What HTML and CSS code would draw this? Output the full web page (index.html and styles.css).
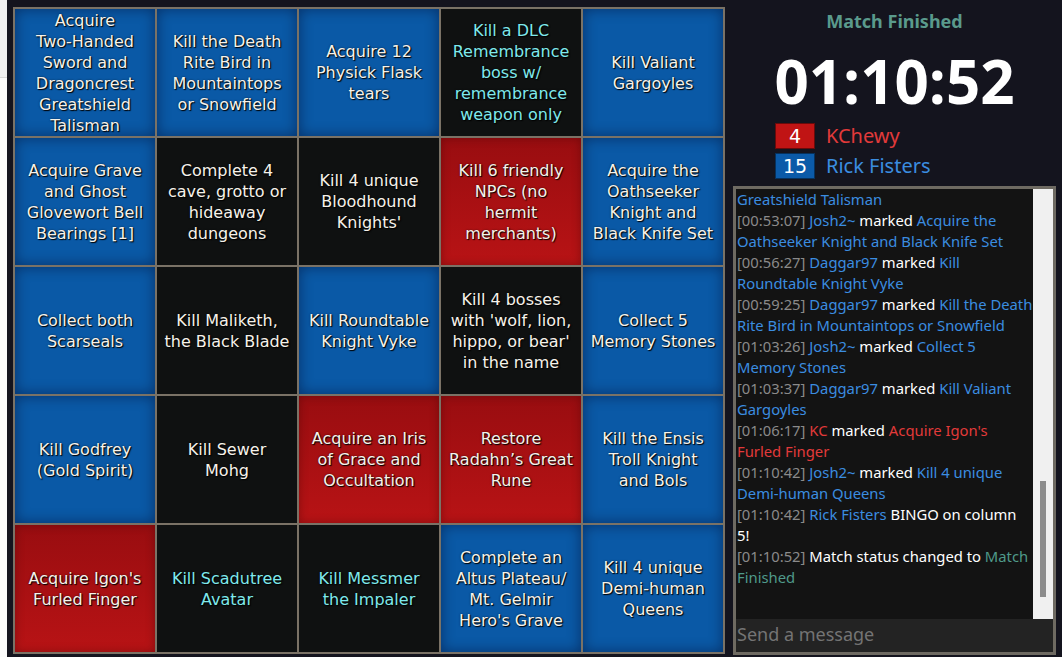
FILE: index.html
```html
<!DOCTYPE html>
<html>
<head>
<meta charset="utf-8">
<link rel="stylesheet" href="styles.css">
</head>
<body>
<div class="page">
  <div class="side-strip"><div class="strip-top"></div></div>
  <div class="board-wrap">
    <div class="board">
      <div class="cell blue">Acquire Two‑Handed Sword and Dragoncrest Greatshield Talisman</div>
      <div class="cell blue">Kill the Death Rite Bird in Mountaintops or Snowfield</div>
      <div class="cell blue">Acquire 12 Physick Flask tears</div>
      <div class="cell dark dlc">Kill a DLC Remembrance boss w/ remembrance weapon only</div>
      <div class="cell blue">Kill Valiant Gargoyles</div>

      <div class="cell blue">Acquire Grave and Ghost Glovewort Bell Bearings [1]</div>
      <div class="cell dark">Complete 4 cave, grotto or hideaway dungeons</div>
      <div class="cell dark">Kill 4 unique Bloodhound Knights'</div>
      <div class="cell red">Kill 6 friendly NPCs (no hermit merchants)</div>
      <div class="cell blue">Acquire the Oathseeker Knight and Black Knife Set</div>

      <div class="cell blue">Collect both Scarseals</div>
      <div class="cell dark">Kill Maliketh, the Black Blade</div>
      <div class="cell blue">Kill Roundtable Knight Vyke</div>
      <div class="cell dark">Kill 4 bosses with 'wolf, lion, hippo, or bear' in the name</div>
      <div class="cell blue">Collect 5 Memory Stones</div>

      <div class="cell blue">Kill Godfrey (Gold Spirit)</div>
      <div class="cell dark">Kill Sewer<br>Mohg</div>
      <div class="cell red">Acquire an Iris of Grace and Occultation</div>
      <div class="cell red">Restore Radahn’s Great Rune</div>
      <div class="cell blue">Kill the Ensis Troll Knight<br>and Bols</div>

      <div class="cell red">Acquire Igon's Furled Finger</div>
      <div class="cell dark dlc">Kill Scadutree Avatar</div>
      <div class="cell dark dlc">Kill Messmer the Impaler</div>
      <div class="cell blue">Complete an Altus Plateau/ Mt. Gelmir Hero's Grave</div>
      <div class="cell blue">Kill 4 unique Demi‑human Queens</div>
    </div>
  </div>

  <div class="panel">
    <div class="status">Match Finished</div>
    <div class="timer">01:10:52</div>
    <div class="scores">
      <div class="score-row"><span class="score-box red-box">4</span><span class="score-name c-red">KChewy</span></div>
      <div class="score-row"><span class="score-box blue-box">15</span><span class="score-name c-blue">Rick Fisters</span></div>
    </div>
    <div class="chat">
      <div class="chat-body">
        <div class="log">
          <div class="msg"><span class="c-blue">Greatshield Talisman</span></div>
          <div class="msg"><span class="ts">[00:53:07]</span> <span class="c-blue">Josh2~</span> marked <span class="c-blue">Acquire the Oathseeker Knight and Black Knife Set</span></div>
          <div class="msg"><span class="ts">[00:56:27]</span> <span class="c-blue">Daggar97</span> marked <span class="c-blue">Kill Roundtable Knight Vyke</span></div>
          <div class="msg"><span class="ts">[00:59:25]</span> <span class="c-blue">Daggar97</span> marked <span class="c-blue">Kill the Death Rite Bird in Mountaintops or Snowfield</span></div>
          <div class="msg"><span class="ts">[01:03:26]</span> <span class="c-blue">Josh2~</span> marked <span class="c-blue">Collect 5 Memory Stones</span></div>
          <div class="msg"><span class="ts">[01:03:37]</span> <span class="c-blue">Daggar97</span> marked <span class="c-blue">Kill Valiant Gargoyles</span></div>
          <div class="msg"><span class="ts">[01:06:17]</span> <span class="c-red">KC</span> marked <span class="c-red">Acquire Igon's<br>Furled Finger</span></div>
          <div class="msg"><span class="ts">[01:10:42]</span> <span class="c-blue">Josh2~</span> marked <span class="c-blue">Kill 4 unique Demi-human Queens</span></div>
          <div class="msg"><span class="ts">[01:10:42]</span> <span class="c-blue">Rick Fisters</span> BINGO on column<br>5!</div>
          <div class="msg"><span class="ts">[01:10:52]</span> Match status changed to <span class="c-teal">Match Finished</span></div>
        </div>
        <div class="scrollbar"><div class="thumb"></div></div>
      </div>
      <div class="input">Send a message</div>
    </div>
  </div>
</div>
</body>
</html>
```

FILE: styles.css
```css
* { box-sizing: border-box; }
html, body { margin: 0; padding: 0; }
body {
  background: #14141e;
  width: 1062px;
  height: 657px;
  overflow: hidden;
}
.page {
  display: flex;
  height: 657px;
}
.side-strip {
  width: 7px;
  flex: none;
  background: #fbfbfb;
}
.strip-top {
  height: 78px;
  background: #f0f0f0;
  border-bottom: 1px solid #d8d8d8;
}
.board-wrap {
  padding: 7px 0 0 6px;
  flex: none;
}
.board {
  display: grid;
  grid-template-columns: repeat(5, 140px);
  grid-template-rows: repeat(5, 127px);
  gap: 2px;
  padding: 2px;
  background: #7a7266;
}
.cell {
  display: flex;
  align-items: center;
  justify-content: center;
  text-align: center;
  padding: 0 5px;
  font-family: "DejaVu Sans", "Liberation Sans", sans-serif;
  font-size: 16px;
  line-height: 21px;
  color: #f6f2ea;
  text-shadow: 1px 1px 1px #000, 0 0 2px rgba(0,0,0,0.6);
}
.blue {
  background: #0a59a6;
  box-shadow: inset 0 0 14px rgba(0, 0, 30, 0.45);
}
.red {
  background: linear-gradient(#990d10, #b81315);
  box-shadow: inset 0 0 10px rgba(40, 0, 0, 0.35);
}
.dark {
  background: #0f1111;
}
.dlc { color: #7fe9ec; }

.panel {
  flex: 1;
  display: flex;
  flex-direction: column;
  padding: 0 6px 2px 8px;
  font-family: "Noto Sans", "Open Sans", sans-serif;
}
.status {
  text-align: center;
  color: #5a9a8c;
  font-weight: bold;
  font-size: 18px;
  line-height: 24px;
  margin-top: 9px;
}
.timer {
  text-align: center;
  color: #ffffff;
  font-family: "Open Sans", "Noto Sans", sans-serif;
  font-weight: bold;
  font-size: 60px;
  line-height: 70px;
  margin-top: 13px;
}
.scores {
  padding-left: 42px;
  margin-top: 7px;
  display: flex;
  flex-direction: column;
  gap: 4px;
}
.score-row {
  display: flex;
  align-items: center;
  gap: 11px;
}
.score-box {
  width: 40px;
  height: 26px;
  display: flex;
  align-items: center;
  justify-content: center;
  color: #fff;
  font-family: "DejaVu Sans", sans-serif;
  font-size: 19px;
  border: 1px solid rgba(0,0,0,0.45);
}
.red-box { background: #c01414; }
.blue-box { background: #0b5aa8; }
.score-name { font-size: 20px; line-height: 26px; }
.c-red { color: #e23a3a; }
.c-blue { color: #3b8de0; }
.c-teal { color: #4f9a8a; }

.chat {
  margin-top: 7px;
  flex: 1;
  display: flex;
  flex-direction: column;
  border: 3px solid #6e6a62;
  background: #131313;
  min-height: 0;
}
.chat-body {
  flex: 1;
  display: flex;
  min-height: 0;
}
.log {
  flex: 1;
  overflow: hidden;
  padding: 0 0 0 1px;
  font-size: 14.8px;
  line-height: 21px;
  color: #ffffff;
}
.ts { color: #8a8a8a; }
.scrollbar {
  width: 20px;
  flex: none;
  background: #f0f0f0;
  display: flex;
  justify-content: center;
}
.thumb {
  width: 6px;
  height: 116px;
  background: #8c8c8c;
  margin-top: 292px;
}
.input {
  height: 33px;
  background: #232323;
  color: #747474;
  font-size: 18px;
  line-height: 31px;
  padding-left: 1px;
}
```
